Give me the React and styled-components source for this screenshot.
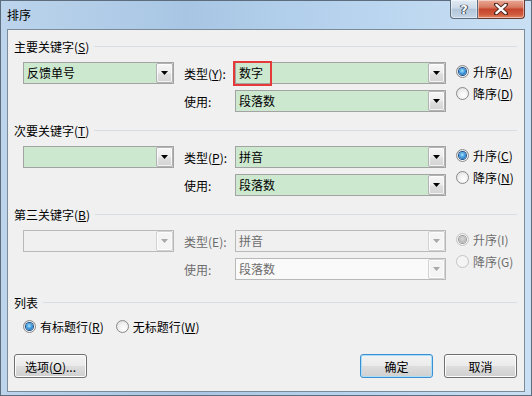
import React from 'react';
import styled, { createGlobalStyle } from 'styled-components';

const GlobalStyle = createGlobalStyle`
  html, body {
    margin: 0;
    padding: 0;
    background: #ffffff;
  }
  body {
    font-family: "Noto Sans CJK SC", "Noto Sans", sans-serif;
    font-size: 12px;
    color: #000;
  }
`;

const Window = styled.div`
  width: 532px;
  height: 396px;
  box-sizing: border-box;
  display: flex;
  flex-direction: column;
  padding: 0 7px 4px 7px;
  background: linear-gradient(90deg, #bcd4ec 0%, #a8c6e4 35%, #b7d3ee 65%, #c9e0f4 100%);
  box-shadow: inset 0 0 0 1px #5d6d7e;
  overflow: hidden;
`;

const TitleBar = styled.div`
  height: 29px;
  display: flex;
  align-items: flex-start;
  flex-shrink: 0;
`;

const TitleText = styled.div`
  padding-top: 7px;
  line-height: 16px;
  font-size: 12px;
  color: #000;
`;

const CaptionButtons = styled.div`
  margin-left: auto;
  display: flex;
`;

const CaptionButton = styled.div`
  height: 19px;
  box-sizing: border-box;
  width: ${p => (p.$close ? '47px' : '28px')};
  display: flex;
  align-items: center;
  justify-content: center;
  border: 1px solid ${p => (p.$close ? '#6a3a30' : '#5e6c7b')};
  border-top: none;
  ${p => (p.$close ? 'border-left: none;' : '')}
  border-bottom-left-radius: ${p => (p.$close ? '0' : '4px')};
  border-bottom-right-radius: ${p => (p.$close ? '4px' : '0')};
  background: ${p =>
    p.$close
      ? 'linear-gradient(180deg, #e9a996 0%, #d87a62 40%, #c5452c 52%, #d0583c 80%, #e08a66 100%)'
      : 'linear-gradient(180deg, #e2ebf4 0%, #ccd9e7 45%, #b3c6d9 52%, #c5d6e7 100%)'};
  box-shadow: inset 0 0 0 1px rgba(255, 255, 255, 0.45);
`;

const HelpGlyph = styled.span`
  font-family: "DejaVu Sans", sans-serif;
  font-weight: bold;
  font-size: 13px;
  line-height: 13px;
  color: #fff;
  text-shadow: 0 0 1px #2c3a48, 0 0 1px #2c3a48, 1px 0 0 #3b4a59, -1px 0 0 #3b4a59;
`;

const Client = styled.div`
  flex: 1;
  display: flex;
  flex-direction: column;
  background: #f0f0f0;
  border: 1px solid #7c8b9a;
  padding: 8px 7px 13px 6px;
`;

const Section = styled.div`
  display: flex;
  flex-direction: column;
  margin-top: ${p => p.$top || 0}px;
`;

const SectionHeader = styled.div`
  display: flex;
  align-items: center;
  height: 16px;
  gap: 5px;
  color: ${p => (p.$disabled ? '#000' : '#000')};
`;

const HeaderLine = styled.div`
  flex: 1;
  height: 1px;
  background: #d5dfe5;
`;

const SectionBody = styled.div`
  display: flex;
  align-items: flex-start;
  margin: 8px 0 10px 9px;
`;

const Fields = styled.div`
  display: flex;
  flex-direction: column;
  gap: 6px;
`;

const FieldRow = styled.div`
  display: flex;
  align-items: center;
`;

const FieldLabel = styled.div`
  width: 51px;
  color: ${p => (p.$disabled ? '#6d6d6d' : '#000')};
`;

const comboBg = {
  green: '#cce8cf',
  disabled: '#f0f0f0',
  blank: '#fafafa',
};

const Combo = styled.div`
  position: relative;
  width: ${p => p.$width}px;
  height: 22px;
  box-sizing: border-box;
  display: flex;
  align-items: stretch;
  border: 1px solid ${p => (p.$tone === 'green' ? '#a3a3a3' : '#b9b9b9')};
  background: ${p => comboBg[p.$tone]};
  margin-right: ${p => p.$gap || 0}px;
  flex-shrink: 0;
`;

const ComboText = styled.div`
  flex: 1;
  padding-left: 3px;
  line-height: 20px;
  color: ${p => (p.$disabled ? '#6d6d6d' : '#000')};
  white-space: nowrap;
  overflow: hidden;
`;

const ArrowButton = styled.div`
  width: 17px;
  box-sizing: border-box;
  display: flex;
  align-items: center;
  justify-content: center;
  border: 1px solid ${p => (p.$disabled ? '#d2d2d2' : '#b3b3b3')};
  border-radius: 2px;
  background: ${p =>
    p.$disabled
      ? '#f4f4f4'
      : 'linear-gradient(180deg, #f6f6f6 0%, #ececec 50%, #dedede 55%, #d4d4d4 100%)'};
  box-shadow: inset 0 0 0 1px rgba(255, 255, 255, 0.7);
`;

const Highlight = styled.div`
  position: absolute;
  left: -3px;
  top: -2px;
  width: 39px;
  height: 25px;
  box-sizing: border-box;
  border: 2px solid #e53a3a;
  pointer-events: none;
`;

const RadioCol = styled.div`
  display: flex;
  flex-direction: column;
  margin: -2px 0 0 10px;
`;

const RadioItem = styled.div`
  display: flex;
  align-items: center;
  gap: 4px;
  height: ${p => p.$h || 22}px;
  color: ${p => (p.$disabled ? '#6d6d6d' : '#000')};
  white-space: nowrap;
`;

const RadioCircle = styled.span`
  width: 13px;
  height: 13px;
  box-sizing: border-box;
  border-radius: 50%;
  display: flex;
  align-items: center;
  justify-content: center;
  border: 1px solid ${p => (p.$disabled ? '#c4c4c4' : '#8a8a8a')};
  background: ${p =>
    p.$disabled
      ? '#f4f4f4'
      : 'radial-gradient(circle at 60% 65%, #ffffff 0%, #f2f2f2 45%, #d6d6d6 100%)'};

  &::after {
    content: '';
    display: ${p => (p.$checked ? 'block' : 'none')};
    width: 7px;
    height: 7px;
    border-radius: 50%;
    background: ${p =>
      p.$disabled
        ? 'radial-gradient(circle at 50% 40%, #d8d8d8 0%, #a9a9a9 100%)'
        : 'radial-gradient(circle at 45% 40%, #a6e4ff 0%, #3d95d8 50%, #175aa3 100%)'};
    box-shadow: 0 0 0 1px ${p => (p.$disabled ? '#9a9a9a' : '#1b4f8a')};
  }
`;

const HeaderRadios = styled.div`
  display: flex;
  align-items: center;
  gap: 12px;
  margin: 8px 0 0 9px;
`;

const ButtonRow = styled.div`
  margin-top: auto;
  display: flex;
  align-items: center;
`;

const Button = styled.div`
  width: 73px;
  height: 24px;
  box-sizing: border-box;
  display: flex;
  align-items: center;
  justify-content: center;
  border: 1px solid ${p => (p.$default ? '#3c8fd0' : '#707070')};
  border-radius: 3px;
  margin-left: ${p => p.$ml || 0};
  background: linear-gradient(180deg, #f3f3f3 0%, #ebebeb 48%, #dddddd 52%, #cfcfcf 100%);
  box-shadow: inset 0 0 0 1px ${p => (p.$default ? '#a9def8' : '#fcfcfc')};
`;

const Key = styled.u`
  text-underline-offset: 1px;
`;

function Accel({ letter, plain }) {
  return <>({plain ? letter : <Key>{letter}</Key>})</>;
}

function Triangle({ disabled }) {
  return (
    <svg width="7" height="4" viewBox="0 0 7 4">
      <polygon points="0,0 7,0 3.5,4" fill={disabled ? '#a8a8a8' : '#000'} />
    </svg>
  );
}

function ComboBox({ width, tone, value, disabled, gap, highlight }) {
  return (
    <Combo $width={width} $tone={tone} $gap={gap}>
      <ComboText $disabled={disabled}>{value}</ComboText>
      <ArrowButton $disabled={disabled}>
        <Triangle disabled={disabled} />
      </ArrowButton>
      {highlight && <Highlight />}
    </Combo>
  );
}

function Radio({ checked, disabled, children, height }) {
  return (
    <RadioItem $disabled={disabled} $h={height}>
      <RadioCircle $checked={checked} $disabled={disabled} />
      <span>{children}</span>
    </RadioItem>
  );
}

const sections = [
  { title: '主要关键字', key: 'S', keyValue: '反馈单号', typeKey: 'Y', type: '数字', use: '段落数', asc: 'A', desc: 'D', highlight: true },
  { title: '次要关键字', key: 'T', keyValue: '', typeKey: 'P', type: '拼音', use: '段落数', asc: 'C', desc: 'N' },
  { title: '第三关键字', key: 'B', keyValue: '', typeKey: 'E', type: '拼音', use: '段落数', asc: 'I', desc: 'G', disabled: true },
];

function SortSection({ s }) {
  const off = s.disabled;
  return (
    <Section>
      <SectionHeader>
        <span>
          {s.title}
          <Accel letter={s.key} />
        </span>
        <HeaderLine />
      </SectionHeader>
      <SectionBody>
        <ComboBox width={151} gap={10} tone={off ? 'disabled' : 'green'} value={s.keyValue} disabled={off} />
        <Fields>
          <FieldRow>
            <FieldLabel $disabled={off}>
              类型<Accel letter={s.typeKey} plain={off} />:
            </FieldLabel>
            <ComboBox width={211} tone={off ? 'disabled' : 'green'} value={s.type} disabled={off} highlight={s.highlight} />
          </FieldRow>
          <FieldRow>
            <FieldLabel $disabled={off}>使用:</FieldLabel>
            <ComboBox width={211} tone={off ? 'blank' : 'green'} value={s.use} disabled={off} />
          </FieldRow>
        </Fields>
        <RadioCol>
          <Radio checked disabled={off}>
            升序<Accel letter={s.asc} plain={off} />
          </Radio>
          <Radio disabled={off}>
            降序<Accel letter={s.desc} plain={off} />
          </Radio>
        </RadioCol>
      </SectionBody>
    </Section>
  );
}

export default function App() {
  return (
    <>
      <GlobalStyle />
      <Window>
        <TitleBar>
          <TitleText>排序</TitleText>
          <CaptionButtons>
            <CaptionButton>
              <HelpGlyph>?</HelpGlyph>
            </CaptionButton>
            <CaptionButton $close>
              <svg width="14" height="12" viewBox="0 0 14 12">
                <path d="M2 1.5 L12 10.5 M12 1.5 L2 10.5" stroke="#4a2520" strokeWidth="4.2" strokeLinecap="round" />
                <path d="M2.4 1.9 L11.6 10.1 M11.6 1.9 L2.4 10.1" stroke="#ffffff" strokeWidth="2.4" strokeLinecap="round" />
              </svg>
            </CaptionButton>
          </CaptionButtons>
        </TitleBar>
        <Client>
          {sections.map(s => (
            <SortSection key={s.key} s={s} />
          ))}
          <Section $top={4}>
            <SectionHeader>
              <span>列表</span>
              <HeaderLine />
            </SectionHeader>
            <HeaderRadios>
              <Radio checked height={16}>
                有标题行<Accel letter="R" />
              </Radio>
              <Radio height={16}>
                无标题行<Accel letter="W" />
              </Radio>
            </HeaderRadios>
          </Section>
          <ButtonRow>
            <Button>
              选项<Accel letter="O" />...
            </Button>
            <Button $default $ml="auto">确定</Button>
            <Button $ml="11px">取消</Button>
          </ButtonRow>
        </Client>
      </Window>
    </>
  );
}
